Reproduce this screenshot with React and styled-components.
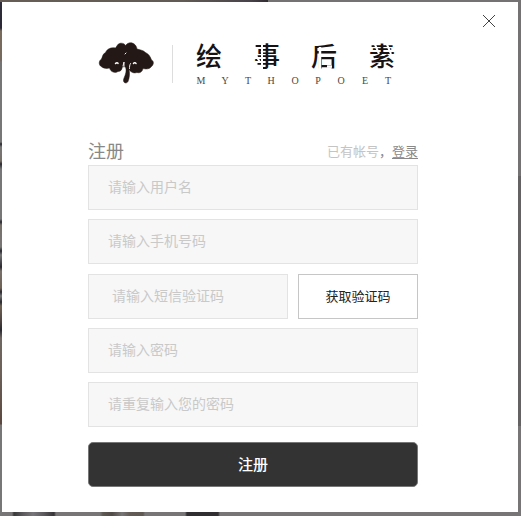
import React from 'react';
import styled, { createGlobalStyle } from 'styled-components';

const GlobalStyle = createGlobalStyle`
  *, *::before, *::after { box-sizing: border-box; }
  body {
    margin: 0;
    font-family: "Liberation Sans", "Noto Sans CJK SC", sans-serif;
  }
`;

const Backdrop = styled.div`
  min-height: 100vh;
  display: flex;
  padding: 2px 3px 4px 2px;
  background:
    linear-gradient(90deg, transparent 12px, #39383b 14px, #5f5d5f 24px, #77757a 33px, #5b595b 44px, #353336 54px, transparent 56px,
      transparent 100px, #5e5752 103px, #514b48 112px, #777575 122px, #625a55 130px, #5e5752 143px, transparent 145px,
      transparent 185px, #302e31 187px, #302e31 218px, transparent 220px) left bottom / 100% 4px no-repeat,
    linear-gradient(90deg, #665e56, #625b55 180px, #484349 250px, #302d32 268px, #747272 268px) left top / 100% 2px no-repeat,
    linear-gradient(#2f2d38, #2b2935 28px, #7a6b5e 31px, #76695f 60px, #747474 62px, #777 100px, #777 142px, #29292f 144px,
      #777 147px, #77706a 161px, #29292f 164px, #777 169px, #777 219px, #29292f 222px, #77706a 225px, #777 247px,
      #29292f 251px, #777 255px, #29292f 267px, #77706a 271px, #6f6256 288px, #29292f 292px, #777 296px, #29292f 302px,
      #6f6256 306px, #514642 320px, #29292f 330px, #6f6762 338px, #6d625a 370px, #5b4840 424px, #777 425px) left top / 2px 100% no-repeat,
    linear-gradient(#747272 176px, #646262 176px, #646262 426px, #777575 426px) right top / 3px 100% no-repeat,
    #777575;
`;

const Dialog = styled.main`
  flex: 1;
  min-width: 0;
  padding: 11px 20px 25px 86px;
  background: #fff;
`;

const DialogHeader = styled.header`
  display: flex;
  align-items: flex-start;
  justify-content: space-between;
`;

const Logo = styled.svg`
  display: block;
  width: 300px;
  height: 56px;
  margin: 18px 0 0 8px;
`;

const CloseButton = styled.button`
  display: block;
  padding: 0;
  border: 0;
  background: none;
  line-height: 0;
  cursor: pointer;
`;

const Form = styled.form`
  margin: 52px 80px 0 0;
`;

const FormHeading = styled.div`
  display: flex;
  align-items: center;
  justify-content: space-between;
  height: 26px;
`;

const Title = styled.h1`
  margin: 0;
  font-size: 18px;
  line-height: 26px;
  font-weight: 400;
  color: #888;
`;

const LoginPrompt = styled.p`
  margin: 0;
  font-size: 13px;
  line-height: 26px;
  color: #c4c4c4;
`;

const Comma = styled.span`
  color: #888;
`;

const LoginLink = styled.a`
  color: #888;
  text-decoration: underline;
  text-underline-offset: 2px;
`;

const Fields = styled.div`
  display: grid;
  gap: 9px;
`;

const CodeRow = styled.div`
  display: grid;
  grid-template-columns: minmax(0, 5fr) minmax(0, 3fr);
  gap: 10px;
  padding-top: 1px;
`;

const TextInput = styled.input`
  display: block;
  width: 100%;
  height: 45px;
  margin: 0;
  padding: 0 ${(p) => (p.$inset ? 23 : 19)}px 2px;
  border: 1px solid #e3e3e3;
  border-radius: 0;
  background: #f7f7f7;
  color: #333;
  font: inherit;
  font-size: 14px;
  outline: none;

  &::placeholder {
    color: #c9c9c9;
    opacity: 1;
  }
`;

const CodeButton = styled.button`
  height: 45px;
  padding: 0 0 2px;
  border: 1px solid #c6c6c6;
  background: #fff;
  color: #222;
  font: inherit;
  font-size: 13px;
  cursor: pointer;
`;

const SubmitButton = styled.button`
  display: block;
  width: 100%;
  height: 45px;
  margin-top: 15px;
  padding: 0 0 2px;
  border: 1px solid #777;
  border-radius: 5px;
  background: #333;
  color: #fff;
  font: inherit;
  font-size: 15px;
  font-weight: 500;
  cursor: pointer;
`;

function BrandLogo() {
  return (
    <Logo viewBox="96 31 300 56" overflow="visible" role="img" aria-label="绘事后素 MYTHOPOET">
      <path
        fill="#231815"
        stroke="#231815"
        strokeWidth="0.500"
        d="M125.500 45.500C124 42.500 119 42.500 117.500 45L115.500 48C111 47 107 49 105.500 52.500C102.500 54 102.500 57 101.500 59C99 60.500 98.500 64 100.500 66C103 68.500 107 69 109.500 68C110.500 72 115 73.500 118 71.500C120.500 71.500 122 70 122.300 67L125.500 67C126.500 70 126 72 125.500 74C125 76.500 123 79 123.500 81C124 83.500 127 83.500 128 81.500C129.500 78 130 73 129 69.500C131 72.500 134 73.500 137 72.500C140 73.500 142.500 71.500 143 68.500C146 69.500 150 69 151.500 66.500C154 64.500 154 61 151.500 60C150.500 57 149 54 145.500 52.500C143 50 140 50 137 49C136.500 45 133 42 129 43C127 43.500 126.500 44.500 125.500 45.500Z"
      />
      <g fill="none" stroke="#fff" strokeLinecap="round">
        <path strokeWidth="1.500" d="M115.500 63.500C116.500 62.500 118 62.500 118 63.500M133.500 63.500C134 62.500 135.500 62.500 136 63.500" />
        <path strokeWidth="0.900" d="M123 66L124 62V69M130.500 63.500C129.500 65 129.500 67 129.500 68.500" />
        <path strokeWidth="1" d="M125 54L126 53" />
      </g>
      <path stroke="#ddd" d="M172.500 45V83" />
      <text x="196 254 311 369" y="66" fontFamily='"Noto Sans CJK SC", sans-serif' fontSize="26" fontWeight="500" fill="#171314">
        绘事后素
      </text>
      <g fill="none" stroke="#fff">
        <path strokeWidth="2" d="M262 42V70M256 56L260 62" />
        <path strokeWidth="2.500" d="M320 47V70M327 66.500H332" />
        <path strokeWidth="2" d="M374 42L379 54M386 42L391 54" />
      </g>
      <text
        x="201 225 248 271 295 318 341 365 388"
        y="84"
        textAnchor="middle"
        fontFamily='"Liberation Serif", serif'
        fontSize="10"
        fill="#4b4646"
      >
        MYTHOPOET
      </text>
    </Logo>
  );
}

export default function App() {
  return (
    <>
      <GlobalStyle />
      <Backdrop>
        <Dialog>
          <DialogHeader>
            <BrandLogo />
            <CloseButton type="button" aria-label="关闭">
              <svg width="18" height="16" viewBox="0 0 18 16" fill="none" stroke="#444" strokeWidth="1">
                <path d="M3 2L15 14M15 2L3 14" />
              </svg>
            </CloseButton>
          </DialogHeader>
          <Form onSubmit={(e) => e.preventDefault()}>
            <FormHeading>
              <Title>注册</Title>
              <LoginPrompt>
                已有帐号<Comma>，</Comma>
                <LoginLink href="#login">登录</LoginLink>
              </LoginPrompt>
            </FormHeading>
            <Fields>
              <TextInput type="text" placeholder="请输入用户名" aria-label="用户名" />
              <TextInput type="tel" placeholder="请输入手机号码" aria-label="手机号码" />
              <CodeRow>
                <TextInput $inset type="text" placeholder="请输入短信验证码" aria-label="短信验证码" />
                <CodeButton type="button">获取验证码</CodeButton>
              </CodeRow>
              <TextInput type="password" placeholder="请输入密码" aria-label="密码" />
              <TextInput type="password" placeholder="请重复输入您的密码" aria-label="重复密码" />
            </Fields>
            <SubmitButton type="submit">注册</SubmitButton>
          </Form>
        </Dialog>
      </Backdrop>
    </>
  );
}
